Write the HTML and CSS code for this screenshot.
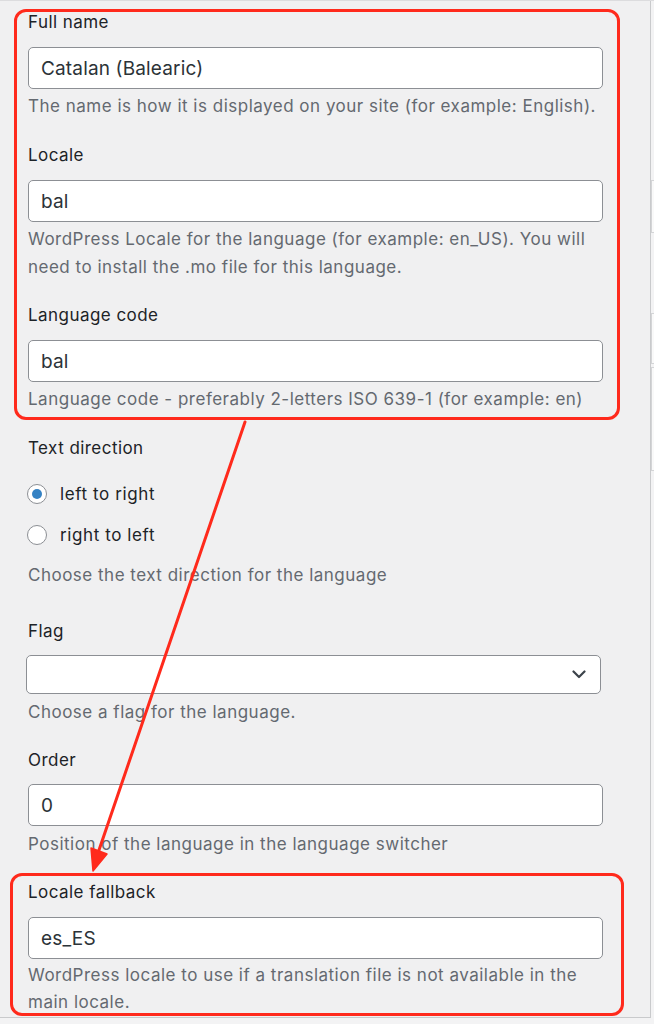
FILE: index.html
```html
<!DOCTYPE html>
<html lang="en">
<head>
<meta charset="utf-8">
<title>Edit language</title>
<link rel="stylesheet" href="styles.css">
</head>
<body>
<div class="screen">
  <div class="panel">
    <div class="hl hl-top">
      <div class="field first">
        <label class="label" for="f-name">Full name</label>
        <input class="input" id="f-name" type="text" value="Catalan (Balearic)">
        <p class="desc">The name is how it is displayed on your site (for example: English).</p>
      </div>
      <div class="field">
        <label class="label" for="f-locale">Locale</label>
        <input class="input" id="f-locale" type="text" value="bal">
        <p class="desc">WordPress Locale for the language (for example: en_US). You will need to install the .mo file for this language.</p>
      </div>
      <div class="field field-tight">
        <label class="label" for="f-code">Language code</label>
        <input class="input" id="f-code" type="text" value="bal">
        <p class="desc">Language code - preferably 2-letters ISO 639-1 (for example: en)</p>
      </div>
    </div>

    <div class="field dir">
      <div class="label">Text direction</div>
      <div class="radio-row first-radio">
        <span class="radio checked"></span>
        <span class="radio-label">left to right</span>
      </div>
      <div class="radio-row">
        <span class="radio"></span>
        <span class="radio-label">right to left</span>
      </div>
      <p class="desc desc-dir">Choose the text direction for the language</p>
    </div>

    <div class="field flag">
      <div class="label">Flag</div>
      <div class="select">
        <svg class="chevron" width="14" height="9" viewBox="0 0 14 9"><path d="M1.5 1.5 L7 7 L12.5 1.5" fill="none" stroke="#3c434a" stroke-width="2.2" stroke-linecap="round" stroke-linejoin="round"/></svg>
      </div>
      <p class="desc desc-sel">Choose a flag for the language.</p>
    </div>

    <div class="field order">
      <label class="label" for="f-order">Order</label>
      <input class="input input-order" id="f-order" type="text" value="0">
      <p class="desc desc-sel">Position of the language in the language switcher</p>
    </div>

    <div class="hl hl-bottom">
      <div class="field first">
        <label class="label" for="f-fallback">Locale fallback</label>
        <input class="input" id="f-fallback" type="text" value="es_ES">
        <p class="desc desc-last">WordPress locale to use if a translation file is not available in the main locale.</p>
      </div>
    </div>
  </div>
  <div class="side">
    <div class="side-box box-a"></div>
    <div class="side-box box-b"></div>
    <div class="side-box box-c"></div>
  </div>
  <svg class="arrow" width="654" height="1024" viewBox="0 0 654 1024">
    <line x1="245" y1="421" x2="98" y2="852" stroke="#ff2a1c" stroke-width="3" stroke-linecap="round"/>
    <polygon points="93,870 107,853 91,847" fill="#ff2a1c" stroke="#ff2a1c" stroke-width="1.5" stroke-linejoin="round"/>
  </svg>
</div>
</body>
</html>
```

FILE: styles.css
```css
* { box-sizing: border-box; }

html, body {
  margin: 0;
  padding: 0;
  background: #f0f0f1;
}

body {
  font-family: Inter, "Noto Sans", "Liberation Sans", sans-serif;
  color: #1d2327;
}

.screen {
  position: relative;
  width: 654px;
  height: 1024px;
  overflow: hidden;
  display: flex;
  align-items: flex-start;
  border-top: 1px solid #dcdcde;
  background: #f3f3f4;
}

.panel {
  flex: 0 0 651px;
  height: 1017px;
  padding: 8px 47px 0 28px;
  background: #f0f0f1;
  border-right: 1px solid #c9cacc;
  border-bottom: 1px solid #c9cacc;
}

.side {
  flex: 1;
  padding-top: 179px;
  display: flex;
  flex-direction: column;
}

.side-box {
  background: #f9f9f9;
  border: 1px solid #d4d5d7;
  border-right: 0;
}
.box-a { height: 53px; }
.box-b { height: 51px; margin-top: 80px; }
.box-c { height: 104px; margin-top: 3px; }

/* highlight boxes */
.hl {
  border: 3px solid #ff2a1c;
  border-radius: 12px;
}
.hl-top {
  margin: 0 -17px 0 -14px;
  padding: 0 14px 4px 11px;
}
.hl-bottom {
  margin: 15px -21px 0 -18px;
  padding: 6px 18px 0 15px;
}

/* fields */
.field { margin-top: 25px; }
.field.first { margin-top: 0; }
.field.field-tight { margin-top: 24px; }
.field.dir { margin-top: 18px; }
.field.flag { margin-top: 32px; }
.field.order { margin-top: 24px; }

.label {
  display: block;
  font-size: 17px;
  line-height: 20px;
  letter-spacing: 0.45px;
  color: #1d2327;
}

.input {
  display: block;
  width: 100%;
  height: 42px;
  margin: 15px 0 0;
  padding: 0 12px;
  border: 1px solid #8c8f94;
  border-radius: 5px;
  background: #fff;
  font-family: Inter, "Noto Sans", "Liberation Sans", sans-serif;
  font-size: 19px;
  letter-spacing: 0.15px;
  color: #2c3338;
  outline: none;
}
.input-order { margin-top: 14px; }

.desc {
  margin: 3px 0 0;
  font-size: 17px;
  line-height: 28px;
  letter-spacing: 0.5px;
  color: #646970;
}
.desc-dir { margin-top: 12px; }
.desc-sel { margin-top: 4px; }
.desc-last {
  line-height: 27px;
  margin-bottom: -3px;
}

/* radios */
.radio-row {
  display: flex;
  align-items: center;
  height: 28px;
  margin-top: 13px;
  margin-left: -1px;
}
.radio-row.first-radio { margin-top: 22px; }

.radio {
  width: 20px;
  height: 20px;
  border: 1px solid #8c8f94;
  border-radius: 50%;
  background: #fff;
  display: flex;
  align-items: center;
  justify-content: center;
  margin-right: 13px;
}
.radio.checked::after {
  content: "";
  width: 10px;
  height: 10px;
  border-radius: 50%;
  background: #3582c4;
}

.radio-label {
  font-size: 17px;
  letter-spacing: 0.6px;
  color: #1d2327;
}

/* select */
.select {
  height: 39px;
  margin: 14px 2px 0 -2px;
  border: 1px solid #8c8f94;
  border-radius: 5px;
  background: #fff;
  display: flex;
  align-items: center;
  justify-content: flex-end;
  padding-right: 14px;
}
.chevron { display: block; }

.arrow {
  position: absolute;
  left: 0;
  top: 0;
  pointer-events: none;
}
```
